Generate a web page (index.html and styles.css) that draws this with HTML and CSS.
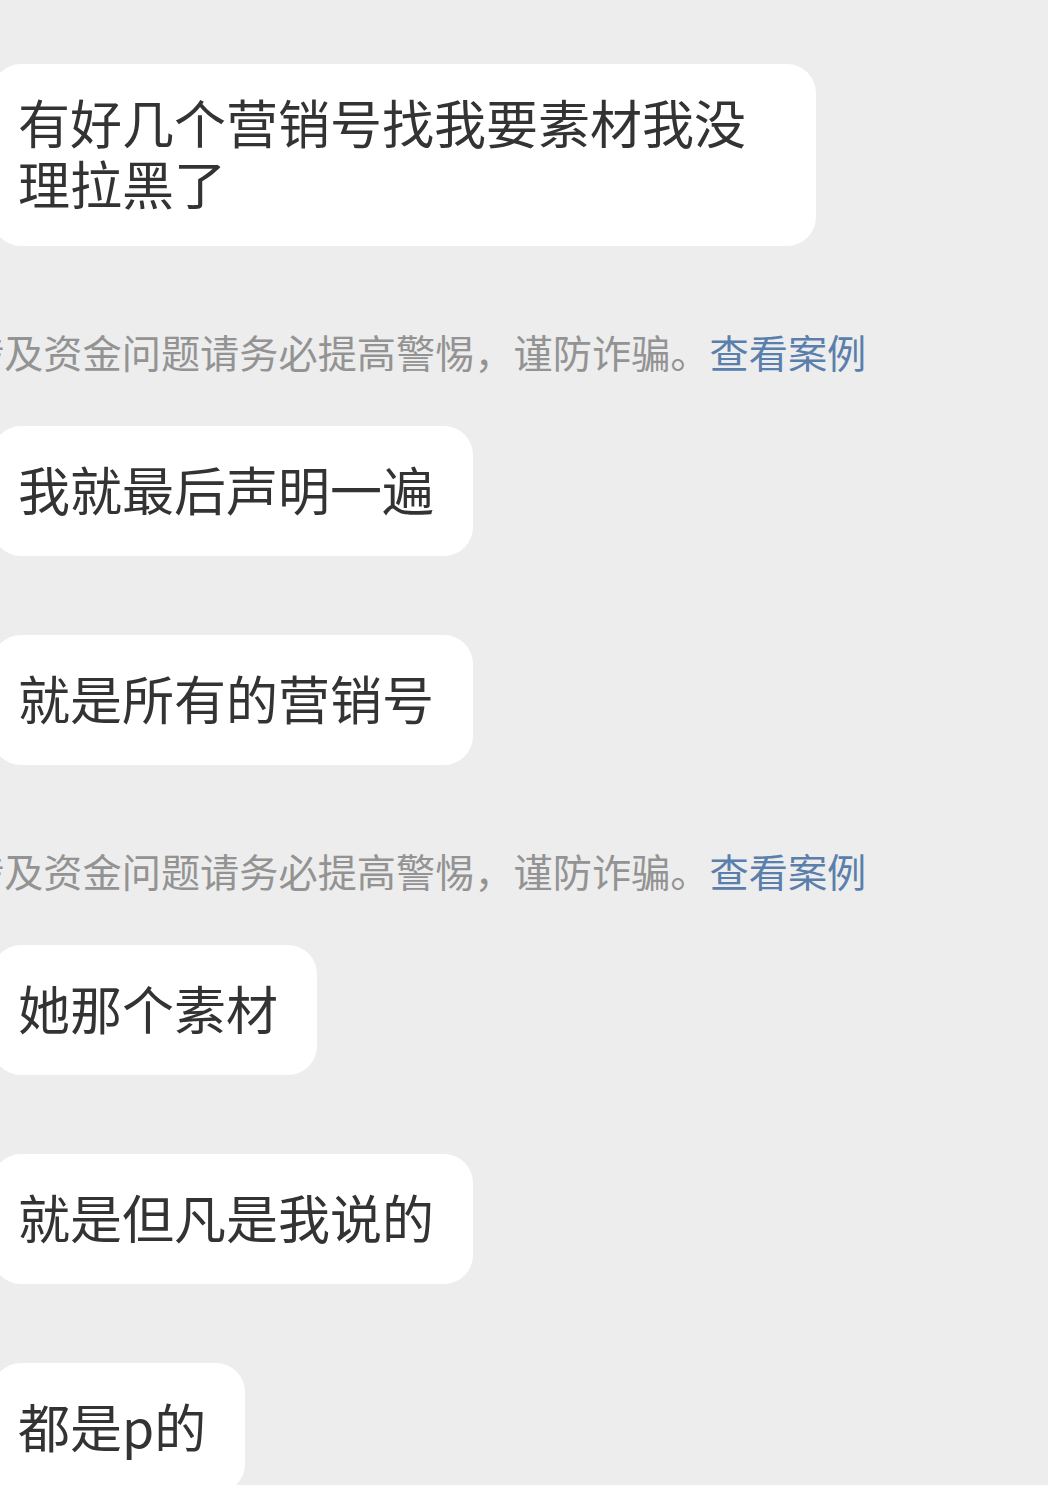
FILE: index.html
```html
<!DOCTYPE html>
<html lang="zh-CN">
<head>
    <meta charset="UTF-8">
    <title>聊天记录</title>
    <link rel="stylesheet" href="styles.css">
</head>
<body>
    <div class="chat">
        <div class="bubble first">有好几个营销号找我要素材我没理拉黑了</div>
        <div class="notice">涉及资金问题请务必提高警惕，谨防诈骗。<span class="link">查看案例</span></div>
        <div class="bubble">我就最后声明一遍</div>
        <div class="bubble">就是所有的营销号</div>
        <div class="notice">涉及资金问题请务必提高警惕，谨防诈骗。<span class="link">查看案例</span></div>
        <div class="bubble">她那个素材</div>
        <div class="bubble">就是但凡是我说的</div>
        <div class="bubble">都是p的</div>
    </div>
</body>
</html>
```

FILE: styles.css
```css
html, body {
    margin: 0;
    background: #ededed;
    overflow: hidden;
}
body {
    font-family: "Noto Sans CJK SC", "Noto Sans", sans-serif;
}
.chat {
    display: flex;
    flex-direction: column;
    align-items: flex-start;
    padding-top: 64px;
}
.bubble {
    box-sizing: border-box;
    display: flex;
    align-items: center;
    min-height: 130px;
    max-width: 837px;
    margin-left: -8px;
    margin-bottom: 79px;
    padding: 27px 39px 33px 26px;
    background: #fff;
    border-radius: 29px;
    color: #333;
    font-size: 52px;
    line-height: 61px;
}
.bubble.first {
    width: 824px;
    min-height: 182px;
}
/* system tip, runs off the left edge like in the app */
.notice {
    margin: 6px 0 55px -35px;
    white-space: nowrap;
    color: #939393;
    font-size: 39.2px;
    line-height: 40px;
}
.link {
    color: #5a7fac;
}
```
